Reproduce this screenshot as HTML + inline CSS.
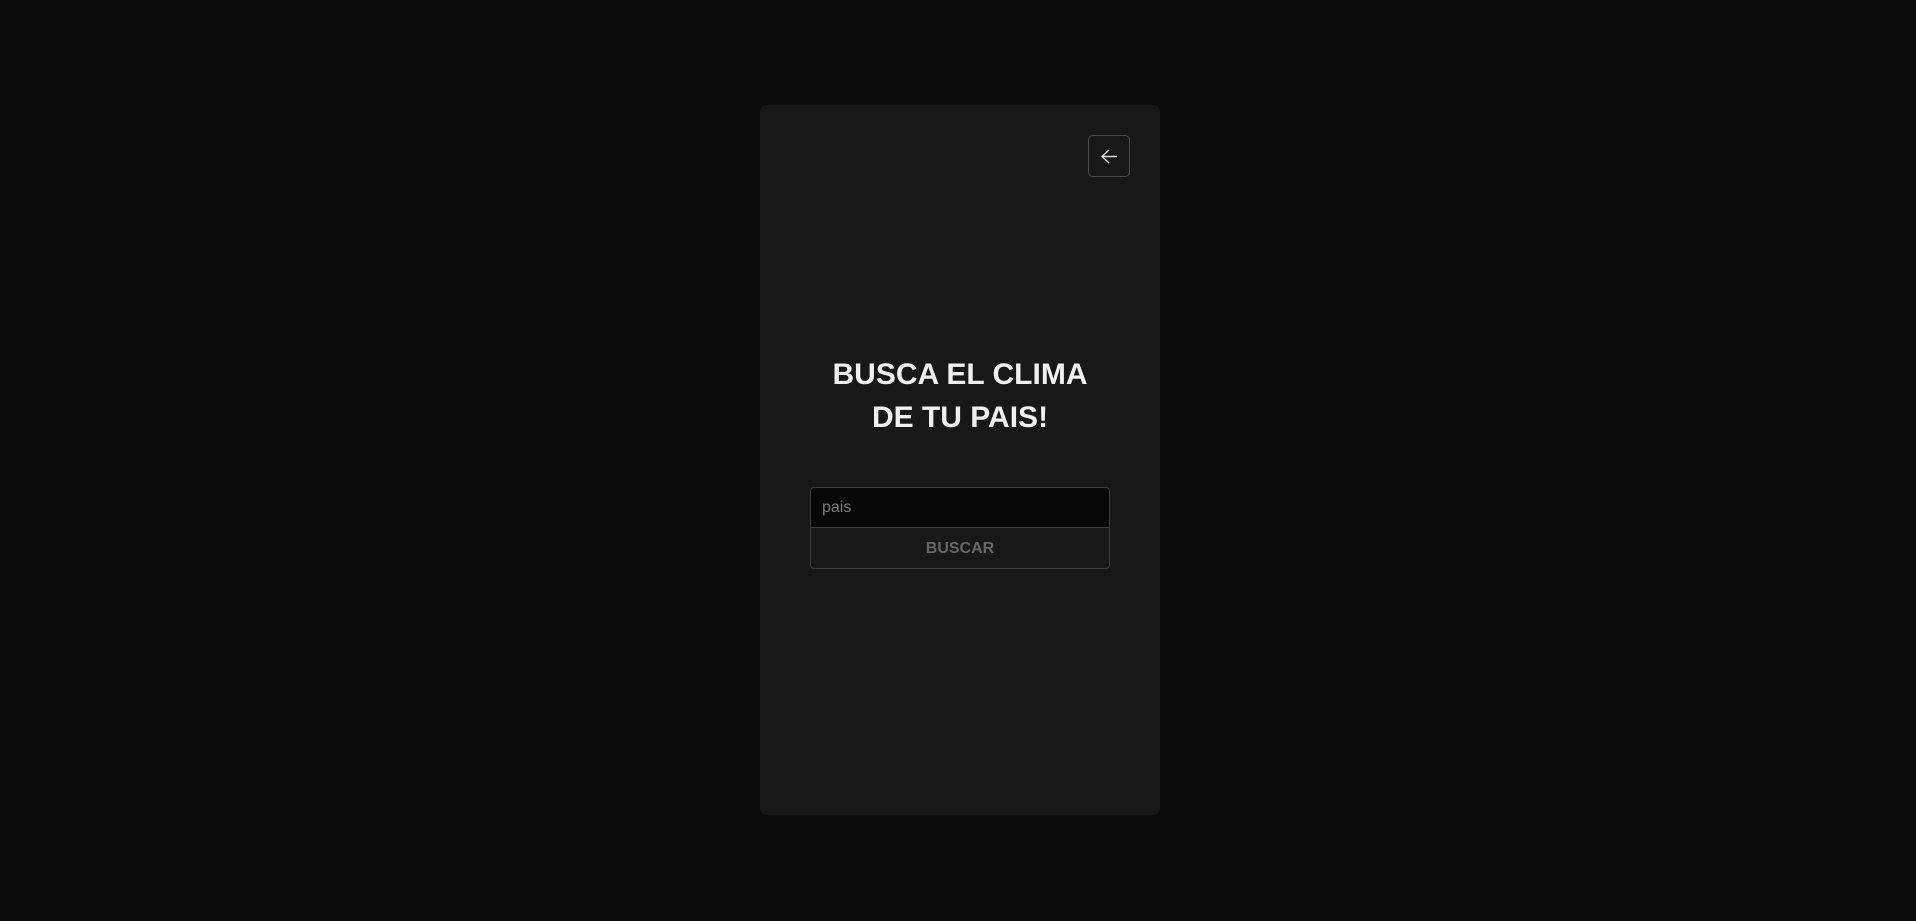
<!DOCTYPE html>
<html><head><style>
html,body{margin:0;height:100%;background:#0b0b0b;}
body{width:1916px;height:921px;position:relative;overflow:hidden;font-family:"Liberation Sans",sans-serif;}
.card{position:absolute;left:760px;top:105px;width:400px;height:710px;background:#181818;border-radius:7px;}
.back{position:absolute;left:328px;top:30px;width:42px;height:42px;border:1px solid #4a4a4a;border-radius:5px;box-sizing:border-box;}
.title{position:absolute;left:0;top:248px;width:400px;text-align:center;color:#f0f0f0;font-weight:bold;font-size:30px;line-height:43px;}
.form{position:absolute;left:50px;top:382px;width:300px;height:82px;border:1px solid #3c3c3c;border-radius:4px;box-sizing:border-box;overflow:hidden;}
.inp{height:39px;background:#080808;border-bottom:1px solid #3c3c3c;color:#7a7a7a;font-size:16px;line-height:39px;padding-left:11px;}
.btn{height:41px;text-align:center;line-height:41px;color:#666;font-weight:bold;font-size:16px;}
</style></head><body>
<div class="card">
<div class="back"><svg width="42" height="42" viewBox="0 0 42 42" style="position:absolute;left:-1px;top:-1px"><path d="M29 21.5H15M21 15l-7 6.5 7 6.5" stroke="#ddd" stroke-width="1.4" fill="none"/></svg></div>
<div class="title">BUSCA EL CLIMA<br>DE TU PAIS!</div>
<div class="form"><div class="inp">pais</div><div class="btn">BUSCAR</div></div>
</div>
</body></html>
